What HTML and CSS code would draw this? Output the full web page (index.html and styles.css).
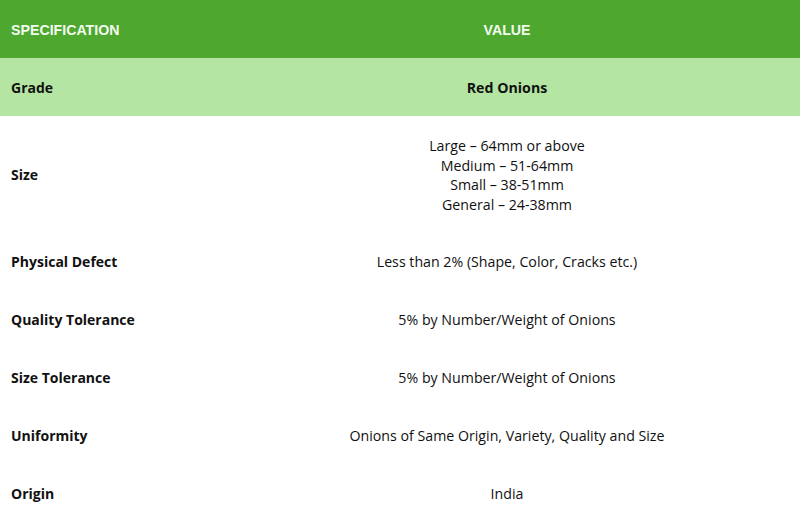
FILE: index.html
```html
<!DOCTYPE html>
<html>
<head>
<meta charset="utf-8">
<link rel="stylesheet" href="styles.css">
</head>
<body>
<table class="spec">
  <thead>
    <tr class="head"><th class="c1">SPECIFICATION</th><th class="c2">VALUE</th></tr>
  </thead>
  <tbody>
    <tr class="grade"><td class="c1">Grade</td><td class="c2 strong">Red Onions</td></tr>
    <tr class="tall"><td class="c1">Size</td><td class="c2">Large – 64mm or above<br>Medium – 51-64mm<br>Small – 38-51mm<br>General – 24-38mm</td></tr>
    <tr><td class="c1">Physical Defect</td><td class="c2">Less than 2% (Shape, Color, Cracks etc.)</td></tr>
    <tr><td class="c1">Quality Tolerance</td><td class="c2">5% by Number/Weight of Onions</td></tr>
    <tr><td class="c1">Size Tolerance</td><td class="c2">5% by Number/Weight of Onions</td></tr>
    <tr><td class="c1">Uniformity</td><td class="c2">Onions of Same Origin, Variety, Quality and Size</td></tr>
    <tr><td class="c1">Origin</td><td class="c2">India</td></tr>
  </tbody>
</table>
</body>
</html>
```
FILE: styles.css
```css
html, body { margin: 0; padding: 0; background: #fff; }
body { font-family: "Open Sans", "Liberation Sans", sans-serif; color: #111; }
.spec { width: 800px; border-collapse: collapse; table-layout: fixed; }
.spec th, .spec td { height: 58px; box-sizing: border-box; padding: 2px 0 0 0; vertical-align: middle; font-size: 14.2px; line-height: 19.5px; }
.spec .c1 { width: 214px; text-align: left; padding-left: 11px; font-weight: 700; font-size: 14px; }
.spec .c2 { text-align: center; }
.head { background: #4ea72e; }
.head th { color: #f2fbef; font-family: "Liberation Sans", Arial, sans-serif; font-weight: 700; padding-top: 3px; }
.head th.c1, .head th.c2 { font-size: 14.2px; }
.grade { background: #b4e5a2; }
.strong { font-weight: 700; }
.tall td { height: 116px; }
```
